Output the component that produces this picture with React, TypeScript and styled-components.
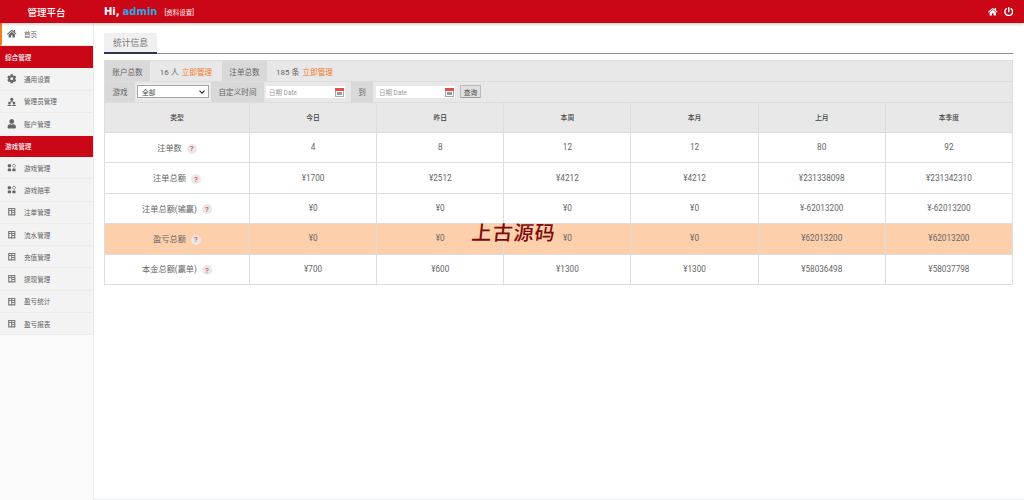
import React from "react";
import styled, { createGlobalStyle } from "styled-components";
import { FaHome, FaCog, FaUser, FaPowerOff } from "react-icons/fa";

const GlobalStyle = createGlobalStyle`
  html, body {
    margin: 0;
    padding: 0;
    background: #fff;
    font-family: Roboto, "Noto Sans CJK SC", sans-serif;
  }
  * { box-sizing: border-box; }
`;

const Page = styled.div`
  width: 1024px;
  height: 500px;
  overflow: hidden;
  display: flex;
  flex-direction: column;
  position: relative;
`;

const Header = styled.header`
  height: 23px;
  flex: none;
  background: #cb0616;
  color: #fff;
  display: flex;
  align-items: center;
  box-shadow: 0 1px 3px rgba(0, 0, 0, 0.25);
  position: relative;
  z-index: 2;
`;

const Brand = styled.div`
  width: 93px;
  text-align: center;
  font-size: 9.5px;
  font-weight: 500;
`;

const Greeting = styled.div`
  margin-left: 11px;
  font-size: 10px;
  font-weight: 700;
  font-family: "DejaVu Sans", sans-serif;
  display: flex;
  align-items: center;
  flex: 1;
`;

const AdminName = styled.span`
  color: #2ba6e6;
  margin-left: 3px;
  font-weight: 700;
`;

const ProfileLink = styled.span`
  font-size: 6.5px;
  font-weight: 400;
  margin-left: 7px;
  font-family: Roboto, "Noto Sans CJK SC", sans-serif;
`;

const HeaderIcons = styled.div`
  display: flex;
  gap: 6px;
  padding-right: 11px;
  align-items: center;
  font-size: 9.5px;
`;

const Body = styled.div`
  flex: 1;
  display: flex;
  min-height: 0;
`;

const Sidebar = styled.aside`
  width: 94px;
  flex: none;
  background: #fafafa;
  border-right: 1px solid #e8edf0;
`;

const NavItem = styled.div<{ $active?: boolean; $h: number }>`
  height: ${({ $h }) => $h}px;
  display: flex;
  align-items: center;
  padding-left: ${({ $active }) => ($active ? 5 : 7)}px;
  width: 92.5px;
  background: ${({ $active }) => ($active ? "#fff" : "#f3f3f3")};
  border-left: ${({ $active }) => ($active ? "2px solid #f57c1f" : "none")};
  border-bottom: 1px solid #ececec;
  color: #5f5f5f;
  font-size: 6.6px;
  svg {
    width: 9.5px;
    height: 9.5px;
    color: #666;
    flex: none;
  }
  span {
    margin-left: 7.5px;
  }
`;

const NavSection = styled.div<{ $h: number }>`
  height: ${({ $h }) => $h}px;
  width: 92.5px;
  background: #cb0616;
  color: #fff;
  font-size: 6.6px;
  font-weight: 500;
  display: flex;
  align-items: center;
  padding-left: 5px;
`;

const Main = styled.main`
  flex: 1;
  padding: 10px 11px 0 10px;
  display: flex;
  flex-direction: column;
  border-bottom: 1px solid #e8edf0;
`;

const TabBar = styled.div`
  height: 21px;
  border-bottom: 1px solid #8b8fa3;
  flex: none;
`;

const Tab = styled.div`
  width: 53px;
  height: 21px;
  background: #f0f0f0;
  border-bottom: 2px solid #2e3552;
  color: #777;
  font-size: 8.8px;
  display: flex;
  align-items: center;
  justify-content: center;
`;

const Panel = styled.div`
  margin-top: 6px;
  border: 1px solid #ddd;
  border-bottom: none;
  background: #e8e8e8;
`;

const InfoRow = styled.div<{ $h: number }>`
  height: ${({ $h }) => $h}px;
  display: flex;
  align-items: stretch;
  border-bottom: 1px solid #ddd;
  font-size: 7.6px;
  color: #666;
`;

const Label = styled.div<{ $w: number }>`
  width: ${({ $w }) => $w}px;
  flex: none;
  background: #d9d9d9;
  display: flex;
  align-items: center;
  justify-content: center;
`;

const Value = styled.div<{ $w: number }>`
  width: ${({ $w }) => $w}px;
  flex: none;
  display: flex;
  align-items: center;
  justify-content: center;
  gap: 3px;
  font-size: 8px;
`;

const ManageLink = styled.span`
  color: #f5761f;
  font-size: 7.6px;
`;

const FilterCell = styled.div<{ $w: number; $pad: number }>`
  width: ${({ $w }) => $w}px;
  flex: none;
  display: flex;
  align-items: center;
  padding-left: ${({ $pad }) => $pad}px;
`;

const Select = styled.div`
  width: 72px;
  height: 13px;
  background: #fff;
  border: 1px solid #a5a5a5;
  box-shadow: 0 0 0 1px #eee;
  font-size: 6.8px;
  padding: 0 3px 0 4px;
  display: flex;
  align-items: center;
  justify-content: space-between;
  color: #444;
  svg {
    width: 6px;
    height: 4px;
  }
`;

const DateInput = styled.div`
  width: 79px;
  height: 12px;
  background: #fff;
  font-size: 6.5px;
  color: #999;
  padding: 0 1px 0 3px;
  display: flex;
  align-items: center;
  justify-content: space-between;
`;

const QueryButton = styled.div`
  width: 21px;
  height: 13px;
  margin-left: 5px;
  background: #e0e0e0;
  border: 1px solid #bbb;
  border-bottom-color: #999;
  border-radius: 1px;
  font-size: 6.8px;
  color: #444;
  display: flex;
  align-items: center;
  justify-content: center;
  align-self: center;
`;

const StatsTable = styled.table`
  width: 909px;
  border-collapse: collapse;
  table-layout: fixed;
  font-size: 8.2px;
  color: #666;
  text-align: center;
`;

const HeadCell = styled.th`
  height: 30px;
  background: #e8e8e8;
  border: 1px solid #ddd;
  border-top: none;
  font-size: 6.8px;
  font-weight: 500;
  color: #444;
  padding: 0;
`;

const BodyRow = styled.tr<{ $warn?: boolean }>`
  background: ${({ $warn }) => ($warn ? "#fecfab" : "#fff")};
`;

const Cell = styled.td`
  height: 30.4px;
  border: 1px solid #ddd;
  padding: 0 0 1px;
`;

const Hint = styled.span`
  display: inline-flex;
  width: 10px;
  height: 10px;
  border-radius: 50%;
  background: #e8e8e8;
  color: #ee4a4f;
  font-size: 8px;
  font-weight: 500;
  align-items: center;
  justify-content: center;
  margin-left: 5px;
  vertical-align: middle;
`;

const Watermark = styled.div`
  position: absolute;
  left: 472px;
  top: 218px;
  font-size: 20px;
  font-weight: 500;
  color: #7d0a0a;
  letter-spacing: 1px;
  line-height: 27px;
  font-family: "Noto Sans CJK SC", sans-serif;
  transform: skewX(-6deg);
`;

const CalendarIcon = () => (
  <svg width="9" height="10" viewBox="0 0 9 10">
    <rect x="0.5" y="1.5" width="8" height="8" fill="#fff" stroke="#aaa" />
    <rect x="0" y="1" width="9" height="3" fill="#e2504c" />
    <rect x="2" y="5" width="5" height="3" fill="#999" />
  </svg>
);

const ChevronIcon = () => (
  <svg viewBox="0 0 6 4">
    <path d="M0.5 0.7 L3 3.2 L5.5 0.7" fill="none" stroke="#333" strokeWidth="1.2" />
  </svg>
);

const TeamIcon = () => (
  <svg viewBox="0 0 10 10" fill="currentColor">
    <circle cx="5" cy="2.4" r="1.7" />
    <path d="M2.8 5.2 C3 4.3 7 4.3 7.2 5.2 L7.2 5.6 L2.8 5.6 Z" />
    <circle cx="2.6" cy="6.4" r="1.4" />
    <path d="M0.3 9.6 C0.3 7.8 4.9 7.8 4.9 9.6 Z" />
    <circle cx="7.4" cy="6.4" r="1.4" />
    <path d="M5.1 9.6 C5.1 7.8 9.7 7.8 9.7 9.6 Z" />
  </svg>
);

const TilesIcon = () => (
  <svg viewBox="0 0 10 10" fill="currentColor">
    <rect x="0.8" y="1.4" width="3.4" height="3" rx="0.4" />
    <path d="M7.4 1 L9.3 2.9 L7.4 4.8 L5.5 2.9 Z" fill="none" stroke="currentColor" strokeWidth="0.7" />
    <rect x="0.8" y="5.8" width="3.4" height="3" rx="0.4" />
    <rect x="5.6" y="5.8" width="3.4" height="3" rx="0.4" />
  </svg>
);

const ReportIcon = () => (
  <svg viewBox="0 0 10 10" fill="currentColor" opacity="0.85">
    <path d="M1.2 1 H8.8 V9 H1.2 Z M2.4 2.2 V3.2 H4.4 V2.2 Z M5.4 2.2 V3.2 H7.6 V2.2 Z M5.4 4.3 V5.2 H7.6 V4.3 Z M5.4 6.3 V7.5 H7.6 V6.3 Z M2.4 4.3 V7.5 H4.4 V4.3 Z" fillRule="evenodd" />
  </svg>
);

const columns = ["今日", "昨日", "本周", "本月", "上月", "本季度"];

const rows: { name: string; values: string[]; warn?: boolean }[] = [
  { name: "注单数", values: ["4", "8", "12", "12", "80", "92"] },
  { name: "注单总额", values: ["¥1700", "¥2512", "¥4212", "¥4212", "¥231338098", "¥231342310"] },
  { name: "注单总额(输赢)", values: ["¥0", "¥0", "¥0", "¥0", "¥-62013200", "¥-62013200"] },
  { name: "盈亏总额", values: ["¥0", "¥0", "¥0", "¥0", "¥62013200", "¥62013200"], warn: true },
  { name: "本金总额(赢单)", values: ["¥700", "¥600", "¥1300", "¥1300", "¥58036498", "¥58037798"] },
];

const gameMenu: { label: string; icon: React.ReactNode }[] = [
  { label: "游戏管理", icon: <TilesIcon /> },
  { label: "游戏赔率", icon: <TilesIcon /> },
  { label: "注单管理", icon: <ReportIcon /> },
  { label: "流水管理", icon: <ReportIcon /> },
  { label: "充值管理", icon: <ReportIcon /> },
  { label: "提现管理", icon: <ReportIcon /> },
  { label: "盈亏统计", icon: <ReportIcon /> },
  { label: "盈亏报表", icon: <ReportIcon /> },
];

export default function App() {
  return (
    <Page>
      <GlobalStyle />
      <Header>
        <Brand>管理平台</Brand>
        <Greeting>
          Hi, <AdminName>admin</AdminName>
          <ProfileLink>[资料设置]</ProfileLink>
        </Greeting>
        <HeaderIcons>
          <FaHome />
          <FaPowerOff />
        </HeaderIcons>
      </Header>
      <Body>
        <Sidebar>
          <NavItem $active $h={23}>
            <FaHome />
            <span>首页</span>
          </NavItem>
          <NavSection $h={22}>综合管理</NavSection>
          <NavItem $h={22.5}><FaCog /><span>通用设置</span></NavItem>
          <NavItem $h={22.5}><TeamIcon /><span>管理员管理</span></NavItem>
          <NavItem $h={22.5}><FaUser /><span>账户管理</span></NavItem>
          <NavSection $h={21.5}>游戏管理</NavSection>
          {gameMenu.map((m) => (
            <NavItem key={m.label} $h={22.3}>
              {m.icon}
              <span>{m.label}</span>
            </NavItem>
          ))}
        </Sidebar>
        <Main>
          <TabBar>
            <Tab>统计信息</Tab>
          </TabBar>
          <Panel>
            <InfoRow $h={21}>
              <Label $w={45}>账户总数</Label>
              <Value $w={72}>16 人 <ManageLink>立即管理</ManageLink></Value>
              <Label $w={45}>注单总数</Label>
              <Value $w={75}>185 条 <ManageLink>立即管理</ManageLink></Value>
            </InfoRow>
            <InfoRow $h={20.5}>
              <Label $w={30}>游戏</Label>
              <FilterCell $w={76} $pad={2}>
                <Select>全部<ChevronIcon /></Select>
              </FilterCell>
              <Label $w={53}>自定义时间</Label>
              <FilterCell $w={87} $pad={2}>
                <DateInput>日期 Date<CalendarIcon /></DateInput>
              </FilterCell>
              <Label $w={22}>到</Label>
              <FilterCell $w={82} $pad={3}>
                <DateInput>日期 Date<CalendarIcon /></DateInput>
              </FilterCell>
              <QueryButton>查询</QueryButton>
            </InfoRow>
          </Panel>
          <StatsTable>
            <colgroup>
              <col style={{ width: 145 }} />
              {columns.map((c) => (
                <col key={c} />
              ))}
            </colgroup>
            <thead>
              <tr>
                <HeadCell>类型</HeadCell>
                {columns.map((c) => (
                  <HeadCell key={c}>{c}</HeadCell>
                ))}
              </tr>
            </thead>
            <tbody>
              {rows.map((r) => (
                <BodyRow key={r.name} $warn={r.warn}>
                  <Cell>
                    {r.name}
                    <Hint>?</Hint>
                  </Cell>
                  {r.values.map((v, i) => (
                    <Cell key={i}>{v}</Cell>
                  ))}
                </BodyRow>
              ))}
            </tbody>
          </StatsTable>
        </Main>
      </Body>
      <Watermark>上古源码</Watermark>
    </Page>
  );
}
